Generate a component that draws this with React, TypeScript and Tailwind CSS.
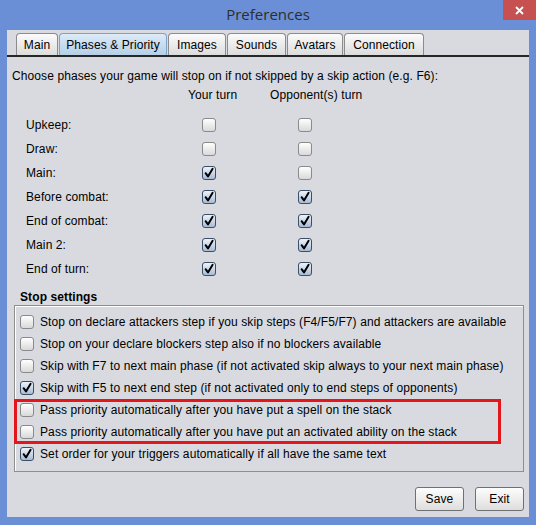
import React from "react";

const Check = ({ checked }: { checked: boolean }) => (
  <span
    className={
      checked
        ? "w-[14px] h-[14px] shrink-0 rounded-[3px] border border-[#3a4e66] bg-gradient-to-b from-[#eef3f9] to-[#a8bdd6] flex items-center justify-center"
        : "w-[14px] h-[14px] shrink-0 rounded-[3px] border border-[#8a8a8a] bg-gradient-to-b from-[#ffffff] to-[#d9d9d9]"
    }
  >
    {checked && (
      <svg width="12" height="12" viewBox="0 0 12 12">
        <path d="M2.6 6.2 L5 9.4 L9.6 1.8" fill="none" stroke="#000" strokeWidth="2" strokeLinecap="round" strokeLinejoin="round" />
      </svg>
    )}
  </span>
);

const tabs = [
  { name: "Main", w: "w-[42px]", sel: false },
  { name: "Phases & Priority", w: "w-[108px]", sel: true },
  { name: "Images", w: "w-[58px]", sel: false },
  { name: "Sounds", w: "w-[59px]", sel: false },
  { name: "Avatars", w: "w-[56px]", sel: false },
  { name: "Connection", w: "w-[80px]", sel: false },
];

const phases: [string, boolean, boolean][] = [
  ["Upkeep:", false, false],
  ["Draw:", false, false],
  ["Main:", true, false],
  ["Before combat:", true, true],
  ["End of combat:", true, true],
  ["Main 2:", true, true],
  ["End of turn:", true, true],
];

const stops: [string, boolean][] = [
  ["Stop on declare attackers step if you skip steps (F4/F5/F7) and attackers are available", false],
  ["Stop on your declare blockers step also if no blockers available", false],
  ["Skip with F7 to next main phase (if not activated skip always to your next main phase)", false],
  ["Skip with F5 to next end step (if not activated only to end steps of opponents)", true],
  ["Pass priority automatically after you have put a spell on the stack", false],
  ["Pass priority automatically after you have put an activated ability on the stack", false],
  ["Set order for your triggers automatically if all have the same text", true],
];

export default function App() {
  return (
    <div className="w-[536px] h-[525px] bg-[#6b8fd6] flex flex-col font-['Liberation_Sans',Arial,sans-serif] text-[12px] tracking-[0.1px] text-black overflow-hidden">
      <div className="h-[30px] shrink-0 relative flex items-center justify-center">
        <span className="text-[15px] tracking-normal text-[#2d2d2d] font-['Open_Sans',sans-serif] -mt-[1px]">Preferences</span>
        <div className="absolute right-0 top-0 w-[33px] h-[20px] bg-[#c75050] flex items-center justify-center">
          <svg width="9" height="9" viewBox="0 0 9 9">
            <path d="M1 1 L8 8 M8 1 L1 8" stroke="#fff" strokeWidth="1.8" />
          </svg>
        </div>
      </div>
      <div className="mx-[7px] h-[487px] bg-[#d8dadf] relative flex flex-col">
        <div className="mt-[4px] h-[23px] flex items-end pl-[9px] border-b-[2px] border-[#262626]">
          {tabs.map((t) => (
            <div
              key={t.name}
              className={
                t.sel
                  ? t.w + " h-[22px] mr-[1px] rounded-t-[4px] border border-b-0 border-[#7ea3c8] bg-gradient-to-b from-[#dcebf8] to-[#b6cfe6] flex items-center justify-center"
                  : t.w + " h-[22px] mr-[1px] rounded-t-[4px] border border-b-0 border-[#8c8c8c] bg-gradient-to-b from-[#fbfbfb] to-[#dcdcdc] flex items-center justify-center"
              }
            >
              {t.name}
            </div>
          ))}
        </div>
        <div className="mt-[12px] pl-[5px] leading-[15px]">
          Choose phases your game will stop on if not skipped by a skip action (e.g. F6):
        </div>
        <div className="mt-[4px] flex leading-[15px]">
          <span className="ml-[181px] w-[82px]">Your turn</span>
          <span>Opponent(s) turn</span>
        </div>
        <div className="mt-[10px] flex flex-col pl-[19px]">
          {phases.map(([label, a, b]) => (
            <div key={label} className="h-[24px] flex items-center">
              <span className="w-[176px]">{label}</span>
              <Check checked={a} />
              <span className="w-[82px]" />
              <Check checked={b} />
            </div>
          ))}
        </div>
        <div className="mt-[9px] pl-[13px] font-bold leading-[15px]">Stop settings</div>
        <div className="ml-[7px] w-[510px] border border-[#8e8e8e] pt-[5px] pb-[6px] pl-[5px] flex flex-col shadow-[inset_1px_1px_0_#ffffff]">
          {stops.map(([label, c]) => (
            <div key={label} className="h-[22px] flex items-center gap-[6px]">
              <Check checked={c} />
              <span>{label}</span>
            </div>
          ))}
        </div>
        <div className="mt-[15px] flex justify-end pr-[5px] gap-[11px]">
          <button className="w-[49px] h-[24px] rounded-[3px] border border-[#707070] bg-gradient-to-b from-[#fdfdfd] to-[#dedede] text-[12px]">Save</button>
          <button className="w-[49px] h-[24px] rounded-[3px] border border-[#707070] bg-gradient-to-b from-[#fdfdfd] to-[#dedede] text-[12px]">Exit</button>
        </div>
        <div className="absolute left-[7px] top-[369px] w-[487px] h-[45px] border-[3px] border-[#e3161c] pointer-events-none" />
      </div>
    </div>
  );
}
